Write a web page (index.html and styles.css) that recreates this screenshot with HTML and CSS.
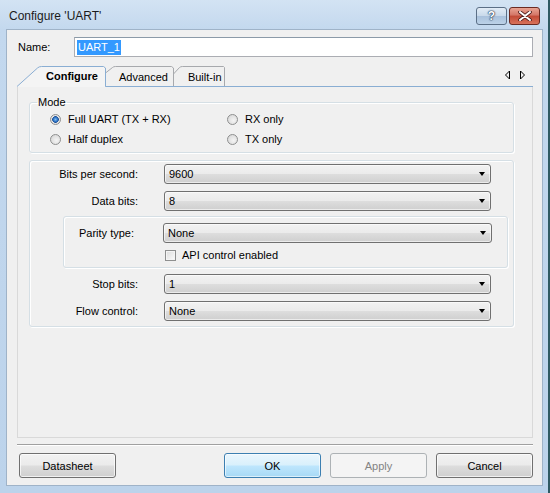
FILE: index.html
```html
<!DOCTYPE html>
<html>
<head>
<meta charset="utf-8">
<link rel="stylesheet" href="styles.css">
</head>
<body>
<div class="window">
  <div class="titlebar">
    <span class="title">Configure 'UART'</span>
    <div class="caption">
      <div class="cbtn help">?</div>
      <div class="cbtn close">
        <svg width="14" height="10" viewBox="0 0 14 10"><path d="M2 1 L12 9 M12 1 L2 9" stroke="#4a1a1a" stroke-width="3.6" stroke-linecap="round"/><path d="M2 1 L12 9 M12 1 L2 9" stroke="#fff" stroke-width="2" stroke-linecap="round"/></svg>
      </div>
    </div>
  </div>
  <div class="client">
    <div class="name-row">
      <span class="name-label">Name:</span>
      <div class="textbox"><span class="sel">UART_1</span></div>
    </div>
    <div class="tabstrip">
      <svg class="tabshape" width="516" height="22" viewBox="0 0 516 22">
        <path d="M156.5 21.5 L156.5 9 L162.5 2.5 Q163.5 1.5 165.5 1.5 L206.5 1.5 L207.5 2.5 L207.5 21.5" fill="#f0f0f0" stroke="#a7a9ad"/>
        <path d="M88.5 21.5 L88.5 8 L95.5 2.5 Q96.5 1.5 98.5 1.5 L154.5 1.5 L156.5 3 L156.5 21.5" fill="#f0f0f0" stroke="#a7a9ad"/>
        <path d="M0 21.5 L20.5 3 Q22 1.5 24.5 1.5 L86.5 1.5 L88.5 3 L88.5 21.5 L516 21.5" fill="#f4f4f4" stroke="#8aaed3"/>
        <path d="M1 22 L88 22" stroke="#f4f4f4" stroke-width="1.5"/>
      </svg>
      <span class="tab active">Configure</span>
      <span class="tab adv">Advanced</span>
      <span class="tab bi">Built-in</span>
      <svg class="scroll" width="22" height="10" viewBox="0 0 22 10">
        <path d="M5.5 1 L1.5 5 L5.5 9 Z" fill="none" stroke="#000"/>
        <path d="M16.5 1 L20.5 5 L16.5 9 Z" fill="none" stroke="#000"/>
      </svg>
    </div>
    <div class="panel">
      <fieldset class="mode">
        <legend>Mode</legend>
        <div class="radio-grid">
          <div class="opt"><span class="radio on"></span>Full UART (TX + RX)</div>
          <div class="opt"><span class="radio"></span>RX only</div>
          <div class="opt"><span class="radio"></span>Half duplex</div>
          <div class="opt"><span class="radio"></span>TX only</div>
        </div>
      </fieldset>
      <div class="group settings">
        <div class="row"><span class="lbl">Bits per second:</span><div class="combo">9600<i class="arrow"></i></div></div>
        <div class="row gap"><span class="lbl">Data bits:</span><div class="combo">8<i class="arrow"></i></div></div>
        <div class="group parity">
          <div class="row"><span class="lbl plbl">Parity type:</span><div class="combo pcombo">None<i class="arrow"></i></div></div>
          <div class="check-row"><span class="check"></span>API control enabled</div>
        </div>
        <div class="row stop"><span class="lbl">Stop bits:</span><div class="combo">1<i class="arrow"></i></div></div>
        <div class="row gap"><span class="lbl">Flow control:</span><div class="combo">None<i class="arrow"></i></div></div>
      </div>
    </div>
    <div class="sep"></div>
    <div class="buttons">
      <div class="btn">Datasheet</div>
      <div class="spacer"></div>
      <div class="btn default">OK</div>
      <div class="btn disabled">Apply</div>
      <div class="btn">Cancel</div>
    </div>
  </div>
</div>
</body>
</html>
```
FILE: styles.css
```css
html, body { margin: 0; padding: 0; }
body {
  width: 550px; height: 493px; overflow: hidden;
  font-family: "Liberation Sans", Arial, sans-serif;
  font-size: 11px; color: #000;
}
.window {
  width: 548px; height: 493px;
  border-right: 2px solid #2f5a63;
  background: linear-gradient(180deg, #d3e3f3 0px, #c3d8ee 30px, #bcd3eb 100%);
  display: flex; flex-direction: column;
}
.titlebar {
  height: 29px; flex: none;
  display: flex; align-items: flex-start;
}
.title {
  font-size: 12px; margin: 9px 0 0 9px; line-height: 14px; color: #1b1b1b;
}
.caption { margin-left: auto; margin-right: 8px; margin-top: 7px; display: flex; gap: 2px; }
.cbtn {
  height: 16px; border: 1px solid #5b6f86; border-radius: 3px;
  display: flex; align-items: center; justify-content: center;
}
.help {
  width: 29px; font-size: 12px; font-weight: bold; color: #fff;
  text-shadow: 0 0 1px #1f3550, 0 0 1px #1f3550, 0 0 2px #1f3550;
  background: linear-gradient(180deg, #e2ecf6 0%, #c8d9ea 50%, #a9c1dc 51%, #bcd2e8 100%);
}
.close {
  width: 29px; border-color: #6b2b22;
  background: linear-gradient(180deg, #e8a493 0%, #d47566 45%, #c24a36 50%, #d8725a 100%);
}
.client {
  margin-left: 6px; height: 455px;
  border: 1px solid #9fb3c8;
  background: #f0f0f0;
  padding: 0 9px 0 11px; box-sizing: content-box;
  width: 515px;
}
.name-row { display: flex; align-items: center; margin-top: 7px; height: 20px; }
.name-label { width: 56px; }
.textbox {
  flex: 1; height: 18px; background: #fff;
  border: 1px solid #abadb3; border-top-color: #8b9aa8;
  display: flex; align-items: center; padding-left: 2px;
}
.sel { background: #3399ff; color: #fff; padding: 1px 1px; line-height: 13px; }
.tabstrip {
  position: relative; margin-top: 8px; margin-left: -1px; height: 22px;
  display: flex; align-items: center;
}
.tabshape { position: absolute; left: 0; top: 0; }
.tab { position: relative; line-height: 13px; margin-top: 2px; }
.tab.active { font-weight: bold; margin-left: 29px; margin-top: 1px; }
.tab.adv { margin-left: 21px; }
.tab.bi { margin-left: 20px; }
.scroll { position: relative; margin-left: auto; margin-right: 7px; margin-top: -2px; }
.panel {
  height: 351px; box-sizing: border-box; margin-left: -1px;
  border: 1px solid #d9d9d9; border-top: none;
  background: #f0f0f0;
  padding: 9px 18px 0 11px;
}
fieldset.mode {
  margin: 0; padding: 0 0 3px 0;
  border: 1px solid #d5dfe5; border-radius: 3px;
  box-shadow: inset 1px 1px 0 #fff, 1px 1px 0 #fff;
}
legend { padding: 0 1px; margin-left: 7px; line-height: 13px; }
.radio-grid { display: grid; grid-template-columns: 177px auto; grid-auto-rows: 20px; padding-left: 20px; }
.opt { display: flex; align-items: center; }
.radio {
  width: 11px; height: 11px; border-radius: 50%; box-sizing: border-box;
  border: 1px solid #8e8f8f; margin-right: 7px;
  background: radial-gradient(circle at 60% 60%, #f4f4f4 0%, #dcdcdc 70%, #c9c9c9 100%);
}
.radio.on {
  background: radial-gradient(circle at 50% 50%, #7fbdf0 0%, #2a6fc0 35%, #1d4f96 48%, #e6e6e6 55%, #d6d6d6 100%);
}
.group {
  border: 1px solid #d5dfe5; border-radius: 3px;
  box-shadow: inset 1px 1px 0 #fff, 1px 1px 0 #fff;
}
.settings { margin-top: 7px; padding: 3px 22px 5px 0; }
.row { display: flex; align-items: center; height: 20px; }
.row.gap { margin-top: 7px; }
.row.stop { margin-top: 6px; }
.lbl { width: 108px; text-align: right; margin-right: 26px; }
.plbl { width: 70px; margin-right: 29px; }
.combo {
  flex: 1; height: 20px; box-sizing: border-box; position: relative;
  border: 1px solid #707070; border-radius: 3px;
  background: linear-gradient(180deg, #f2f2f2 0%, #ebebeb 48%, #dddddd 52%, #cfcfcf 100%);
  display: flex; align-items: center; padding-left: 4px;
  box-shadow: inset 0 0 0 1px rgba(255,255,255,0.6);
}
.arrow {
  position: absolute; right: 5px; top: 7px;
  width: 0; height: 0;
  border-left: 3.5px solid transparent; border-right: 3.5px solid transparent;
  border-top: 4px solid #000;
}
.parity { margin: 5px -17px 0 33px; padding: 6px 15px 2px 0; }
.check-row { display: flex; align-items: center; height: 20px; margin-top: 2px; padding-left: 101px; }
.check {
  width: 11px; height: 11px; box-sizing: border-box; margin-right: 6px;
  border: 1px solid #8e8f8f;
  background: linear-gradient(135deg, #dcdcdc 0%, #f2f2f2 70%, #ffffff 100%);
  box-shadow: inset 0 0 0 1px #f4f4f4;
}
.sep {
  margin-top: 6px; margin-left: -1px; height: 1px; background: #a0a0a0;
  border-bottom: 1px solid #fff;
}
.buttons { display: flex; margin-top: 7px; gap: 9px; padding-left: 1px; }
.spacer { flex: 1; }
.btn {
  width: 97px; height: 25px; box-sizing: border-box;
  border: 1px solid #707070; border-radius: 3px;
  background: linear-gradient(180deg, #f2f2f2 0%, #ebebeb 48%, #dddddd 52%, #cfcfcf 100%);
  display: flex; align-items: center; justify-content: center;
  box-shadow: inset 0 0 0 1px rgba(255,255,255,0.7);
}
.btn.default {
  border-color: #3c7fb1;
  background: linear-gradient(180deg, #eaf6fd 0%, #d9f0fc 48%, #bee6fd 52%, #a7d9f5 100%);
  box-shadow: inset 0 0 0 1px rgba(255,255,255,0.6);
}
.btn.disabled {
  border-color: #adb2b5; background: #f4f4f4; color: #838383; box-shadow: none;
}
```
